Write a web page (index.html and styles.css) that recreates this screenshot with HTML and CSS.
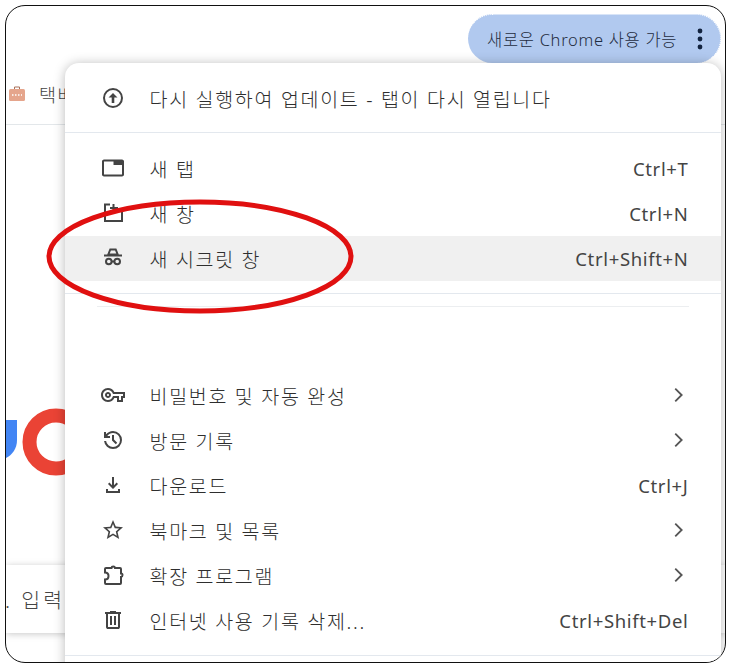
FILE: index.html
```html
<!DOCTYPE html>
<html lang="ko">
<head>
  <meta charset="UTF-8">
  <title>새 시크릿 창</title>
  <link rel="stylesheet" href="styles.css">
</head>
<body>
  <div class="frame">
    <!-- 뒤쪽 브라우저 화면 -->
    <div class="topbar">
      <div class="update-pill">
        <span>새로운 Chrome 사용 가능</span>
        <svg class="dots" viewBox="0 0 8 24"><circle cx="4" cy="4" r="2.400"/><circle cx="4" cy="12" r="2.400"/><circle cx="4" cy="20" r="2.400"/></svg>
      </div>
    </div>
    <div class="bookmarks">
      <svg class="bm-icon" viewBox="0 0 16 16"><path class="bm-handle" d="M5.500 3V1h5v2"/><rect class="bm-box" x="0" y="3" width="16" height="12" rx="1.500"/><path class="bm-line" d="M3 9h10"/></svg>
      <span>택배</span>
    </div>
    <div class="logo">
      <svg viewBox="0 0 62 68" width="62" height="68">
        <path class="logo-blue" d="M-6 12h17v20c0 9-5 15-11 18l-6 0z"/>
        <circle class="logo-red" cx="50" cy="34" r="26.500"/>
      </svg>
    </div>
    <div class="searchbox"><span class="search-text">.. 입력</span></div>

    <!-- 메뉴 -->
    <div class="menu">
      <div class="row row-first">
        <svg class="icon" viewBox="0 0 24 24"><path d="M12 2a10 10 0 1 0 0 20 10 10 0 0 0 0-20zm0 18a8 8 0 1 1 0-16 8 8 0 0 1 0 16z"/><path d="M12 7l-4.500 4.500h3.200V17h2.600v-5.500h3.200z"/></svg>
        <span class="label">다시 실행하여 업데이트 - 탭이 다시 열립니다</span>
      </div>
      <div class="sep sep-first"></div>
      <div class="group">
        <div class="row">
          <svg class="icon" viewBox="0 0 24 24"><path d="M21 3.500H3c-1.100 0-2 .9-2 2v13c0 1.100.9 2 2 2h18c1.100 0 2-.9 2-2v-13c0-1.100-.9-2-2-2zm0 15H3v-13h9.500V9H21v9.500z"/></svg>
          <span class="label">새 탭</span><span class="key">Ctrl+T</span>
        </div>
        <div class="row">
          <svg class="icon icon-line" viewBox="0 0 24 24"><path d="M9 3.500H4V20h17V9M12.500 3v8M9 7h8"/></svg>
          <span class="label">새 창</span><span class="key">Ctrl+N</span>
        </div>
        <div class="row row-hover">
          <svg class="icon icon-line" viewBox="0 0 24 24"><path d="M9.300 3.500h5.400l2 5H7.300zM3 9.500h18M10.700 15.500h2.600"/><circle cx="7.800" cy="15.500" r="2.800"/><circle cx="16.200" cy="15.500" r="2.800"/></svg>
          <span class="label">새 시크릿 창</span><span class="key">Ctrl+Shift+N</span>
        </div>
      </div>
      <div class="sep sep-second"></div>
      <div class="sep-inset"></div>
      <div class="group group-tools">
        <div class="row">
          <svg class="icon" viewBox="0 0 24 24"><path d="M22 19h-6v-4h-2.680c-1.140 2.420-3.600 4-6.320 4-3.860 0-7-3.140-7-7s3.140-7 7-7c2.720 0 5.170 1.580 6.320 4H24v6h-2v4zm-4-2h2v-4h2v-2H11.940l-.23-.67C11.010 8.340 9.110 7 7 7c-2.760 0-5 2.240-5 5s2.240 5 5 5c2.110 0 4.010-1.340 4.710-3.330l.23-.67H18v4zM7 15c-1.650 0-3-1.350-3-3s1.350-3 3-3 3 1.350 3 3-1.350 3-3 3zm0-4c-.55 0-1 .45-1 1s.45 1 1 1 1-.45 1-1-.45-1-1-1z"/></svg>
          <span class="label">비밀번호 및 자동 완성</span>
          <svg class="chev" viewBox="0 0 24 24"><path d="M9 5l7 7-7 7"/></svg>
        </div>
        <div class="row">
          <svg class="icon" viewBox="0 0 24 24"><path d="M12 21q-3.450 0-6.012-2.288T3.050 13H5.100q.35 2.600 2.313 4.300T12 19q2.925 0 4.963-2.037T19 12q0-2.925-2.037-4.962T12 5q-1.725 0-3.225.8T6.250 8H9v2H3V4h2v2.350q1.275-1.600 3.113-2.475T12 3q3.750 0 6.375 2.625T21 12q0 3.750-2.625 6.375T12 21zm2.800-4.800L11 12.400V7h2v4.600l3.200 3.200-1.400 1.400z"/></svg>
          <span class="label">방문 기록</span>
          <svg class="chev" viewBox="0 0 24 24"><path d="M9 5l7 7-7 7"/></svg>
        </div>
        <div class="row">
          <svg class="icon" viewBox="0 0 24 24"><path d="M12 16l-5-5 1.400-1.450L11 12.150V4h2v8.150l2.600-2.600L17 11l-5 5zM5 20v-4h2v2h10v-2h2v4H5z"/></svg>
          <span class="label">다운로드</span><span class="key">Ctrl+J</span>
        </div>
        <div class="row">
          <svg class="icon" viewBox="0 0 24 24"><path d="M22 9.240l-7.190-.62L12 2 9.190 8.630 2 9.240l5.460 4.730L5.820 21 12 17.270 18.180 21l-1.630-7.030L22 9.240zM12 15.400l-3.760 2.270 1-4.280-3.320-2.880 4.380-.38L12 6.100l1.710 4.040 4.380.38-3.320 2.880 1 4.280L12 15.400z"/></svg>
          <span class="label">북마크 및 목록</span>
          <svg class="chev" viewBox="0 0 24 24"><path d="M9 5l7 7-7 7"/></svg>
        </div>
        <div class="row">
          <svg class="icon icon-line" viewBox="0 0 24 24"><path d="M5 5h5.500c.2-2 3.300-2 3.500 0h5a1 1 0 0 1 1 1v4.500c2-.2 2 3.300 0 3.500v6a1 1 0 0 1-1 1H5a1 1 0 0 1-1-1v-3.500c2.500 0 3.500-1.500 3.500-3.500S6.500 9.500 4 9.500V6a1 1 0 0 1 1-1z"/></svg>
          <span class="label">확장 프로그램</span>
          <svg class="chev" viewBox="0 0 24 24"><path d="M9 5l7 7-7 7"/></svg>
        </div>
        <div class="row">
          <svg class="icon" viewBox="0 0 24 24"><path d="M7 21q-.825 0-1.412-.587T5 19V6H4V4h5V3h6v1h5v2h-1v13q0 .825-.587 1.413T17 21H7zM17 6H7v13h10V6zM9 17h2V8H9v9zm4 0h2V8h-2v9z"/></svg>
          <span class="label">인터넷 사용 기록 삭제...</span><span class="key">Ctrl+Shift+Del</span>
        </div>
      </div>
      <div class="sep"></div>
    </div>

    <!-- 빨간 동그라미 표시 -->
    <svg class="mark" viewBox="0 0 731 668" width="731" height="668"><ellipse cx="200" cy="256.500" rx="151" ry="54.500"/></svg>
  </div>
</body>
</html>
```

FILE: styles.css
```css
html, body { margin:0; background:#fff; }
body { font-family:'Noto Sans', 'Noto Sans CJK KR', sans-serif; color:#444; }

.frame { position:relative; box-sizing:border-box; width:721px; height:658px; margin:5px; border:1.5px solid #111; border-radius:20px; overflow:hidden; background:#fff; }

.topbar { display:flex; justify-content:flex-end; padding:7.5px 4px 0 0; }
.update-pill { box-sizing:border-box; width:253px; height:49px; display:flex; align-items:center; justify-content:space-between; padding:0 16px 0 19px; background:#b1c9ef; border-radius:25px; border-top:1px dotted #fff; border-right:1px dotted #fff; font-size:16.500px; font-weight:300; letter-spacing:.7px; color:#1f2c40; white-space:nowrap; }
.dots { width:8px; height:24px; fill:#12233f; }

.bookmarks { display:flex; align-items:center; height:60px; margin-top:1px; padding-left:3px; gap:14px; border-bottom:1px solid #e3e7ea; font-size:18.500px; font-weight:300; letter-spacing:1.500px; color:#444; white-space:nowrap; }
.bm-icon { width:16px; height:16px; flex:none; }
.bm-handle { fill:none; stroke:#a8705a; stroke-width:1; }
.bm-box { fill:#e5a58c; }
.bm-line { stroke:#fff; stroke-width:1.500; stroke-dasharray:1.500 1.500; }

.logo { margin-top:283px; height:68px; line-height:0; }
.logo-blue { fill:#4285f4; }
.logo-red { fill:none; stroke:#ea4335; stroke-width:14; }

.searchbox { box-sizing:border-box; height:68px; margin-top:89px; display:flex; align-items:center; background:#fff; box-shadow:0 1px 7px rgba(0,0,0,.22); font-size:20.500px; font-weight:300; letter-spacing:3px; color:#444; white-space:nowrap; }
.search-text { margin-left:-9px; }

.menu { position:absolute; top:56.500px; left:58.500px; width:656px; height:620px; padding-top:13px; box-sizing:border-box; background:#fff; border-radius:14px 14px 0 0; box-shadow:0 1px 12px rgba(0,0,0,.28); }

.row { box-sizing:border-box; height:45px; display:flex; align-items:center; padding:0 32px 0 36px; }
.row-hover { background:#f0f0f0; }
.icon { width:24px; height:24px; flex:none; margin-right:25px; fill:#444; }
.icon-line { fill:none; stroke:#444; stroke-width:2; }
.label { flex:1; font-size:19.500px; font-weight:300; letter-spacing:1.700px; color:#2e2e2e; white-space:nowrap; }
.key { font-size:18.500px; letter-spacing:.65px; color:#444; white-space:nowrap; }
.chev { width:22px; height:22px; fill:none; stroke:#555; stroke-width:2; }

.sep { height:1px; background:#e3e8ee; }
.sep-first { margin-top:11px; }
.group { margin-top:13px; }
.sep-second { margin-top:12px; }
.sep-inset { height:1px; margin:12px 32px 0; background:#eceef0; }
.group-tools { margin-top:66px; margin-bottom:12px; }

.mark { position:absolute; top:-6.500px; left:-6.500px; pointer-events:none; }
.mark ellipse { fill:none; stroke:#e01010; stroke-width:5; }
```
